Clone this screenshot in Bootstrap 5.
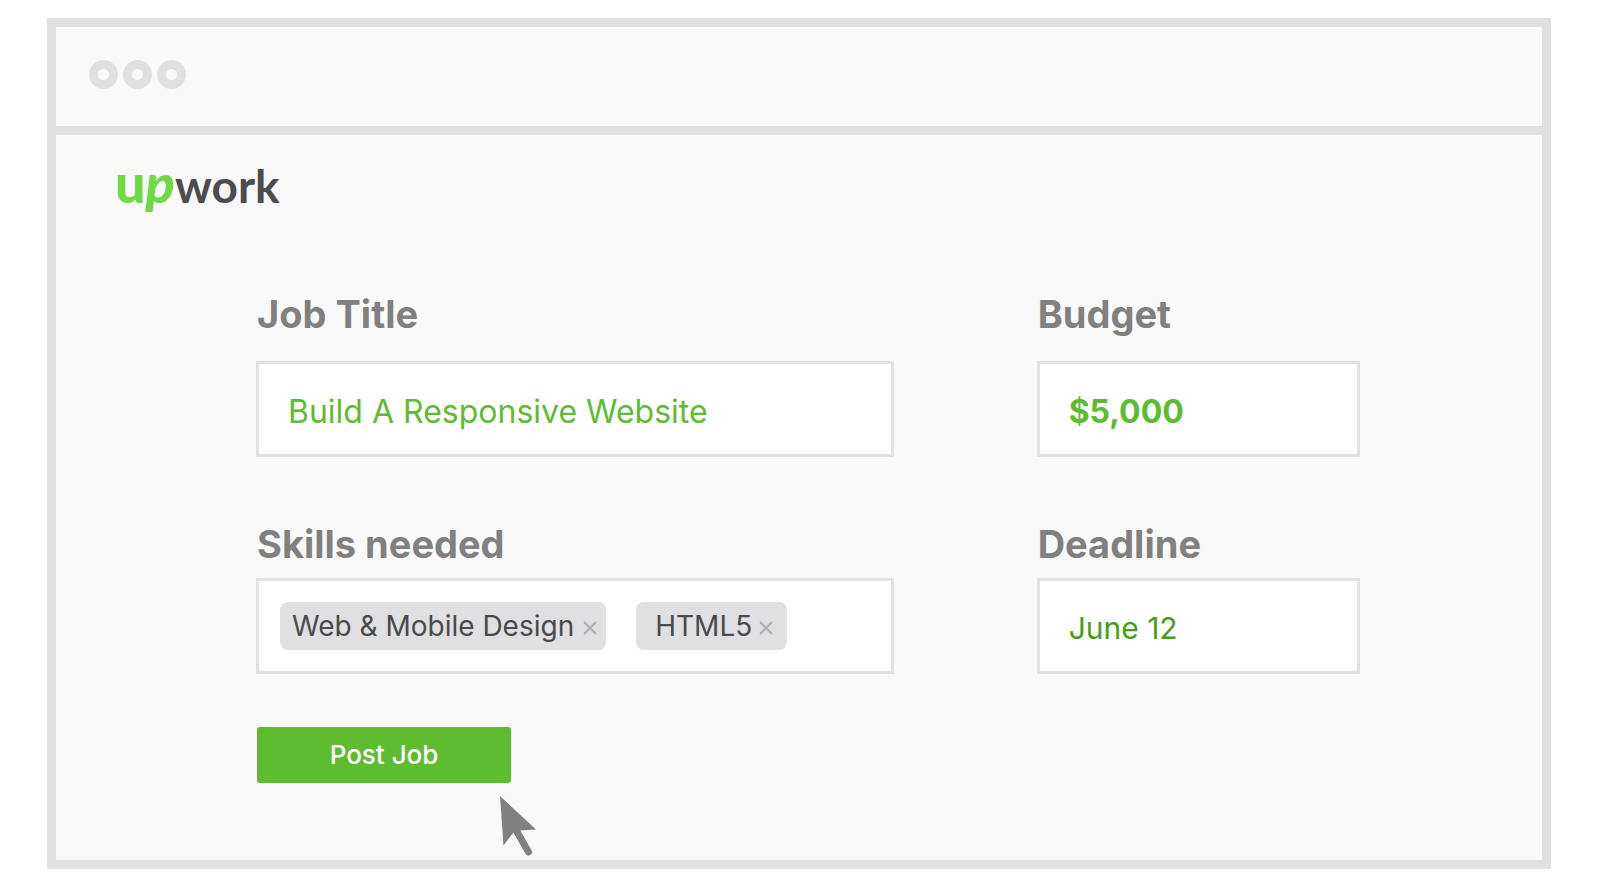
<!DOCTYPE html>
<html lang="en">
<head>
<meta charset="utf-8">
<meta name="viewport" content="width=device-width, initial-scale=1">
<title>Upwork - Post a Job</title>
<link href="https://cdn.jsdelivr.net/npm/bootstrap@5.3.0/dist/css/bootstrap.min.css" rel="stylesheet">
<style>
  :root { --line: #e0e0e2; --green: #5dbc30; --pane: #f9f9f9; }
  body { font-family: Inter, "Liberation Sans", sans-serif; background: #fff; }
  .page { padding: 18px 49px 18px 47px; }
  .browser { border: 9px solid var(--line); background: var(--pane); }
  .browser-bar { height: 108px; gap: 5px; padding: 0 33px 4px; border-bottom: 9px solid var(--line); }
  .ring { width: 29px; height: 29px; border: 9px solid var(--line); border-radius: 50%; }
  .brand { font-family: Lato, sans-serif; font-size: 46px; line-height: 60px; height: 60px; font-weight: 700; color: #4c4c4e; margin: 21px 0 76px 59px; }
  .brand-up { color: #6fda44; font-weight: 900; font-size: 54px; line-height: 1; }
  .job-form { padding: 0 182px 77px 200px; }
  .fields { display: grid; grid-template-columns: 637fr 323fr; column-gap: 143px; row-gap: 65px; }
  .field-label { display: block; font-size: 38px; line-height: 44px; font-weight: 700; color: #808080; margin-bottom: 25px; padding-left: 1px; }
  .label-tight { margin-bottom: 12px; }
  .field-box { height: 96px; border: 3px solid #e1e1e2; border-radius: 0; background: #fff; color: var(--green); font-size: 32px; padding: 4px 29px 0; }
  .field-box:focus { color: var(--green); }
  .value-strong { font-weight: 700; }
  .value-date, .value-date:focus { color: #43a012; font-size: 30px; }
  .skills { padding: 0 21px; gap: 30px; }
  .chip { height: 48px; border-radius: 8px; background: var(--line); color: #4a4a4a; font-size: 28px; line-height: 48px; padding: 0 8px 0 12px; gap: 8px; }
  .chip-short { padding: 0 13px 0 19px; gap: 6px; }
  .chip-x { border: 0; background: none; padding: 4px 0 0; display: flex; }
  .skill-input { border: 0; outline: 0; min-width: 0; }
  .post { position: relative; width: 254px; height: 56px; margin: 53px 0 0 1px; }
  .btn-post, .btn-post:hover { background: var(--green); color: #fff; border: 0; border-radius: 3px; font-size: 26px; font-weight: 500; line-height: 56px; padding: 0; }
  .pointer { position: absolute; left: 242px; top: 68px; }
</style>
</head>
<body>
<div class="page">
  <main class="browser">
    <div class="browser-bar d-flex align-items-center">
      <span class="ring"></span><span class="ring"></span><span class="ring"></span>
    </div>
    <div class="brand"><span class="brand-up">u<i>p</i></span>work</div>
    <form class="job-form">
      <div class="fields">
        <div>
          <label class="field-label" for="title">Job Title</label>
          <input class="form-control field-box" id="title" type="text" value="Build A Responsive Website">
        </div>
        <div>
          <label class="field-label" for="budget">Budget</label>
          <input class="form-control field-box value-strong" id="budget" type="text" value="$5,000">
        </div>
        <div>
          <label class="field-label label-tight" for="skill">Skills needed</label>
          <div class="field-box skills d-flex align-items-center">
            <span class="chip d-flex align-items-center flex-shrink-0">Web &amp; Mobile Design
              <button class="chip-x" type="button" aria-label="Remove Web &amp; Mobile Design"><svg width="16" height="16" viewBox="0 0 16 16"><path d="M2 2L14 14M14 2L2 14" stroke="#aeaeb0" stroke-width="2"/></svg></button></span>
            <span class="chip chip-short d-flex align-items-center flex-shrink-0">HTML5
              <button class="chip-x" type="button" aria-label="Remove HTML5"><svg width="16" height="16" viewBox="0 0 16 16"><path d="M2 2L14 14M14 2L2 14" stroke="#aeaeb0" stroke-width="2"/></svg></button></span>
            <input class="skill-input flex-fill w-25" id="skill" type="text">
          </div>
        </div>
        <div>
          <label class="field-label label-tight" for="deadline">Deadline</label>
          <input class="form-control field-box value-date" id="deadline" type="text" value="June 12">
        </div>
      </div>
      <div class="post">
        <button class="btn btn-post w-100 h-100" type="submit">Post Job</button>
        <svg class="pointer" width="40" height="62" viewBox="0 0 40 62" aria-hidden="true">
          <path d="M1 1L37 34.500L20 35.500L14 38L4.500 50.500Z" fill="#808082"/>
          <path d="M17 35L29.500 57" stroke="#808082" stroke-width="7" stroke-linecap="round"/>
        </svg>
      </div>
    </form>
  </main>
</div>
<script src="https://cdn.jsdelivr.net/npm/bootstrap@5.3.0/dist/js/bootstrap.bundle.min.js"></script>
</body>
</html>
